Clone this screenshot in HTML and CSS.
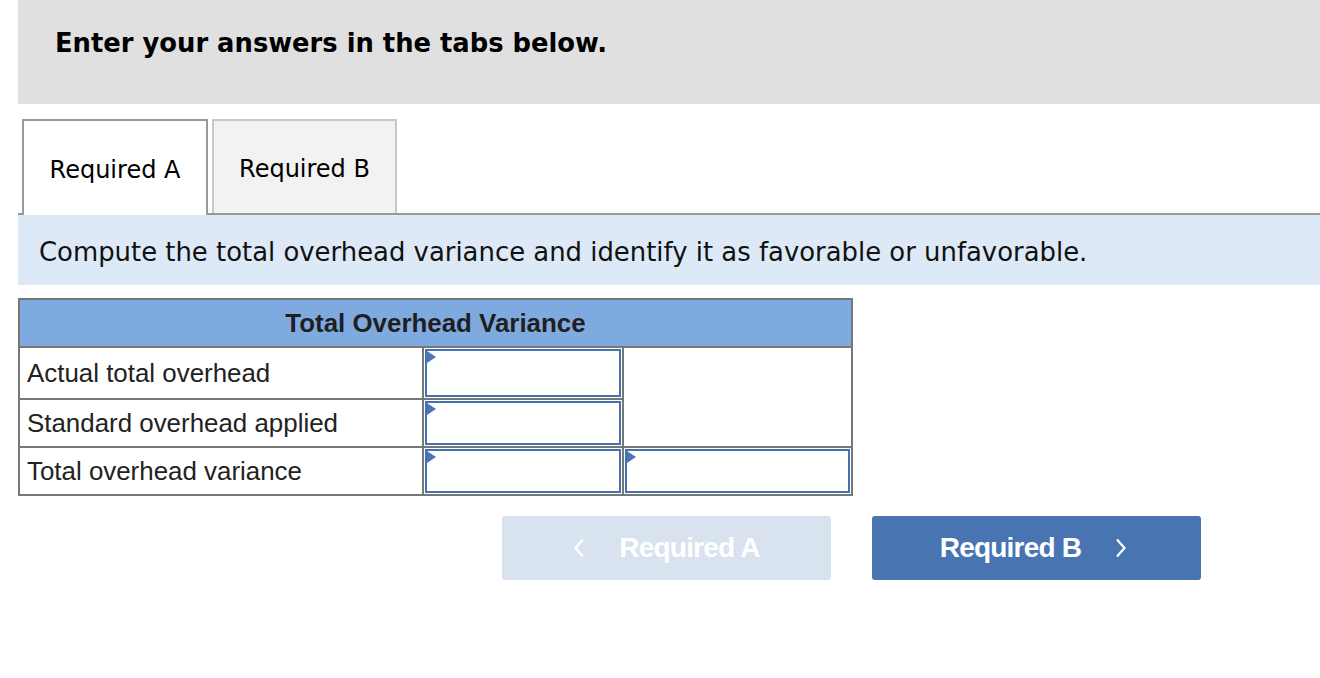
FILE: index.html
```html
<!DOCTYPE html>
<html lang="en">
<head>
<meta charset="utf-8">
<title>Total Overhead Variance</title>
<link rel="stylesheet" href="styles.css">
</head>
<body>
<div class="page">
  <div class="prompt">
    <h2 class="prompt-title">Enter your answers in the tabs below.</h2>
  </div>

  <div class="tabs">
    <div class="tab tab-active">Required A</div>
    <div class="tab tab-inactive">Required B</div>
  </div>

  <div class="instructions">Compute the total overhead variance and identify it as favorable or unfavorable.</div>

  <table class="worksheet">
    <thead>
      <tr><th colspan="3" class="ws-head">Total Overhead Variance</th></tr>
    </thead>
    <tbody>
      <tr class="r1">
        <td class="label">Actual total overhead</td>
        <td class="cell"><div class="input"><span class="flag"></span></div></td>
        <td class="blank" rowspan="2"></td>
      </tr>
      <tr class="r2">
        <td class="label">Standard overhead applied</td>
        <td class="cell"><div class="input"><span class="flag"></span></div></td>
      </tr>
      <tr class="r3">
        <td class="label">Total overhead variance</td>
        <td class="cell"><div class="input"><span class="flag"></span></div></td>
        <td class="cell cell-wide"><div class="input"><span class="flag"></span></div></td>
      </tr>
    </tbody>
  </table>

  <div class="nav">
    <button class="nav-btn nav-prev" type="button">
      <svg class="chev" width="12" height="20" viewBox="0 0 12 20" aria-hidden="true"><path d="M10 1.5 L2.5 10 L10 18.5" fill="none" stroke="currentColor" stroke-width="2.2"/></svg>
      <span>Required A</span>
    </button>
    <button class="nav-btn nav-next" type="button">
      <span>Required B</span>
      <svg class="chev" width="12" height="20" viewBox="0 0 12 20" aria-hidden="true"><path d="M2 1.5 L9.5 10 L2 18.5" fill="none" stroke="currentColor" stroke-width="2.2"/></svg>
    </button>
  </div>
</div>
</body>
</html>
```
FILE: styles.css
```css
* { box-sizing: border-box; }
html, body { margin: 0; padding: 0; background: #fff; }
body { font-family: "DejaVu Sans", Verdana, sans-serif; color: #000; }

.page { margin-left: 18px; width: 1302px; }

.prompt {
  background: #e0e0e0;
  height: 104px;
  padding: 27px 0 0 37px;
}
.prompt-title {
  margin: 0;
  font-size: 25.8px;
  font-weight: bold;
  line-height: 32px;
  color: #000;
}

.tabs {
  display: flex;
  gap: 4px;
  margin-top: 15px;
  padding-left: 4px;
  border-bottom: 2px solid #999;
  height: 96px;
}
.tab {
  display: flex;
  align-items: center;
  justify-content: center;
  font-size: 24px;
  padding-top: 3px;
  color: #000;
}
.tab-active {
  width: 186px;
  background: #fff;
  border: 2px solid #9a9a9a;
  border-bottom: none;
  height: 96px;
  margin-bottom: -2px;
}
.tab-inactive {
  width: 185px;
  background: #f2f2f2;
  border: 2px solid #c8c8c8;
  border-bottom: none;
  height: 94px;
}

.instructions {
  background: #dde9f7;
  height: 70px;
  padding: 21px 0 0 21px;
  font-size: 25.9px;
  line-height: 32px;
  color: #111;
}

.worksheet {
  margin-top: 13px;
  border-collapse: collapse;
  width: 835px;
  font-family: "Liberation Sans", Arial, sans-serif;
  font-size: 25.9px;
  color: #222;
}
.worksheet th, .worksheet td { border: 2px solid #777; padding: 0; }
.ws-head {
  background: #7faadf;
  height: 48px;
  font-weight: bold;
  text-align: center;
  color: #1f1f1f;
}
.label { width: 405px; padding-left: 7px !important; }
.r1 td { height: 52px; }
.r2 td, .r3 td { height: 48px; }
.cell { width: 200px; padding: 1px !important; }
.cell-wide { width: 230px; }
.input {
  position: relative;
  height: 44px;
  border: 2px solid #4672b0;
  background: #fff;
}
.r1 .input { height: 48px; }
.flag {
  position: absolute;
  left: 0;
  top: 0;
  width: 0;
  height: 0;
  border-top: 6px solid transparent;
  border-bottom: 6px solid transparent;
  border-left: 9px solid #4a76b4;
}

.nav {
  display: flex;
  gap: 41px;
  margin-top: 20px;
  padding-left: 484px;
}
.nav-btn {
  width: 329px;
  height: 64px;
  border: none;
  border-radius: 3px;
  font-family: "Liberation Sans", Arial, sans-serif;
  font-weight: bold;
  font-size: 28px;
  letter-spacing: -0.8px;
  color: #fff;
  display: flex;
  align-items: center;
  justify-content: center;
  gap: 34px;
  padding: 0;
}
.nav-prev { background: #d9e3ef; }
.nav-next { background: #4875b2; padding-right: 6px; }
.chev { display: block; }
```
